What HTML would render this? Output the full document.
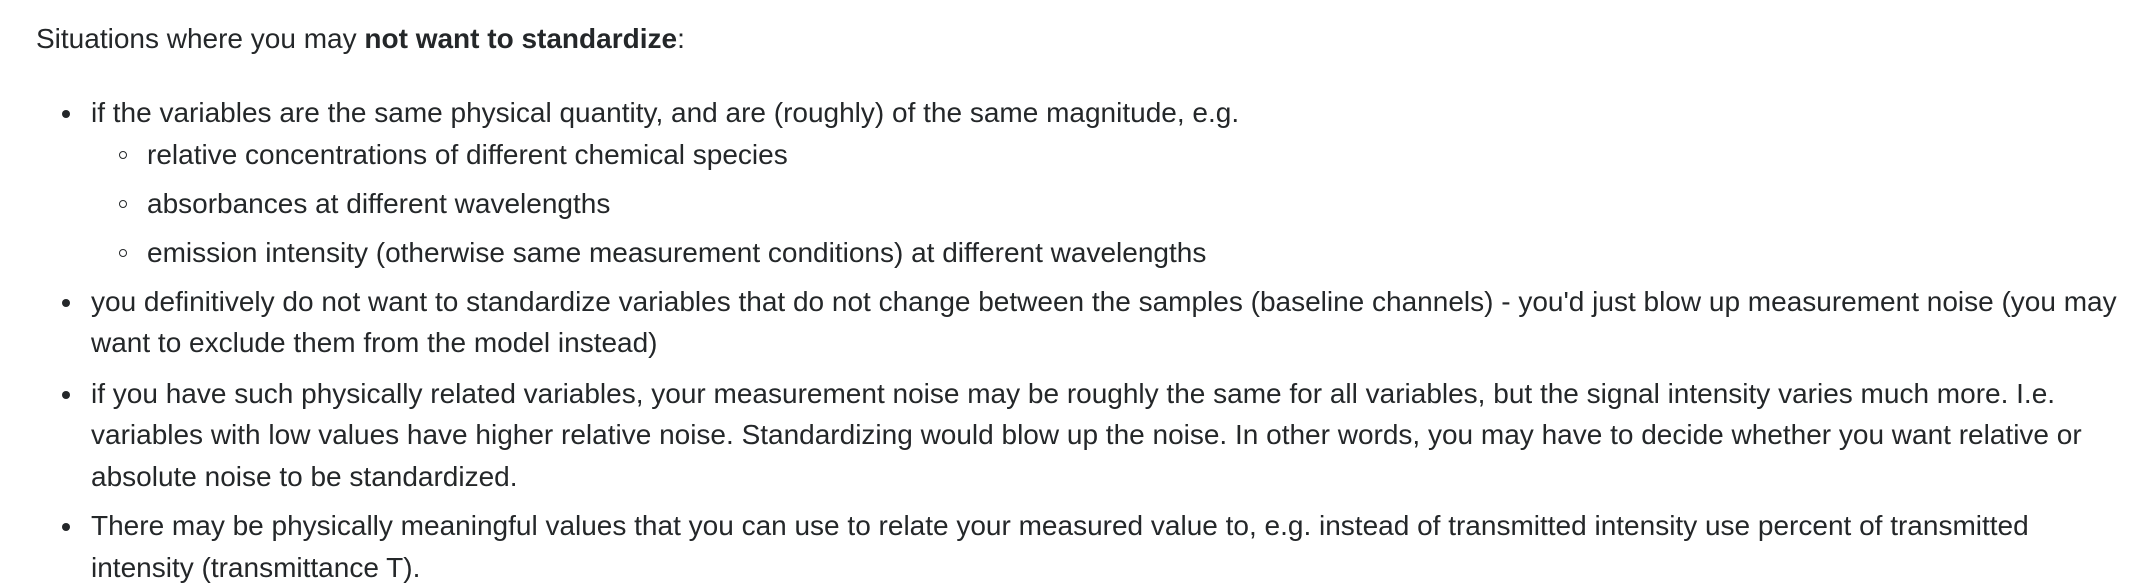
<!DOCTYPE html>
<html><head><meta charset="utf-8"><style>
html,body{margin:0;padding:0;background:#fff;}
body{width:2138px;height:586px;position:relative;overflow:hidden;font-family:"Liberation Sans",Arial,sans-serif;font-size:28px;color:#242729;}
.l{position:absolute;white-space:nowrap;line-height:40px;height:40px;}
.d{position:absolute;width:8px;height:8px;border-radius:50%;background:#242729;}
.c{position:absolute;width:6px;height:6px;border-radius:50%;border:1.7px solid #242729;}
</style></head><body>
<div class="l" style="left:36px;top:19px">Situations where you may <b>not want to standardize</b>:</div>

<div class="d" style="left:62px;top:110px"></div>
<div class="l" style="left:91px;top:93px">if the variables are the same physical quantity, and are (roughly) of the same magnitude, e.g.</div>
<div class="c" style="left:119px;top:151px"></div>
<div class="l" style="left:147px;top:135px">relative concentrations of different chemical species</div>
<div class="c" style="left:119px;top:200px"></div>
<div class="l" style="left:147px;top:184px">absorbances at different wavelengths</div>
<div class="c" style="left:119px;top:249px"></div>
<div class="l" style="left:147px;top:233px">emission intensity (otherwise same measurement conditions) at different wavelengths</div>

<div class="d" style="left:62px;top:299px"></div>
<div class="l" style="left:91px;top:282px">you definitively do not want to standardize variables that do not change between the samples (baseline channels) - you'd just blow up measurement noise (you may</div>
<div class="l" style="left:91px;top:323px">want to exclude them from the model instead)</div>

<div class="d" style="left:62px;top:391px"></div>
<div class="l" style="left:91px;top:374px">if you have such physically related variables, your measurement noise may be roughly the same for all variables, but the signal intensity varies much more. I.e.</div>
<div class="l" style="left:91px;top:415px">variables with low values have higher relative noise. Standardizing would blow up the noise. In other words, you may have to decide whether you want relative or</div>
<div class="l" style="left:91px;top:457px">absolute noise to be standardized.</div>

<div class="d" style="left:62px;top:523px"></div>
<div class="l" style="left:91px;top:506px">There may be physically meaningful values that you can use to relate your measured value to, e.g. instead of transmitted intensity use percent of transmitted</div>
<div class="l" style="left:91px;top:548px">intensity (transmittance T).</div>
</body></html>
